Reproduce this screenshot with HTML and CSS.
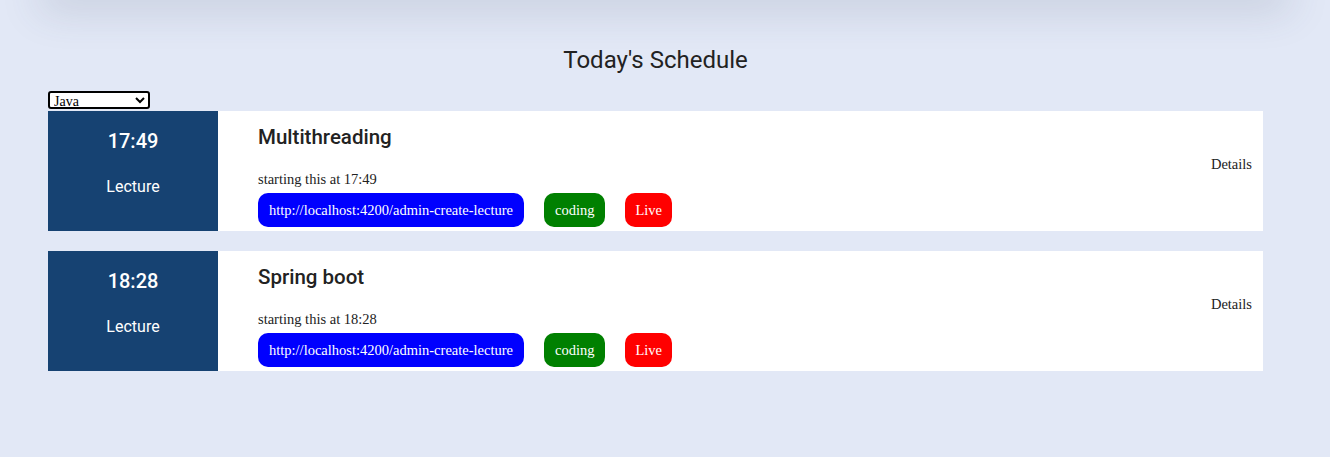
FILE: index.html
```html
<!DOCTYPE html>
<html>
<head>
<meta charset="utf-8">
<link rel="stylesheet" href="styles.css">
</head>
<body>
<div class="topbar"></div>
<main class="page">
  <h2 class="heading">Today's Schedule</h2>
  <select class="filter">
    <option>Java</option>
  </select>
  <div class="list">
    <div class="card">
      <div class="when">
        <div class="time">17:49</div>
        <div class="type">Lecture</div>
      </div>
      <div class="body">
        <div class="title">Multithreading</div>
        <div class="start">starting this at 17:49</div>
        <div class="tags">
          <span class="tag tag-link">http://localhost:4200/admin-create-lecture</span>
          <span class="tag tag-cat">coding</span>
          <span class="tag tag-live">Live</span>
        </div>
      </div>
      <div class="details">Details</div>
    </div>
    <div class="card">
      <div class="when">
        <div class="time">18:28</div>
        <div class="type">Lecture</div>
      </div>
      <div class="body">
        <div class="title">Spring boot</div>
        <div class="start">starting this at 18:28</div>
        <div class="tags">
          <span class="tag tag-link">http://localhost:4200/admin-create-lecture</span>
          <span class="tag tag-cat">coding</span>
          <span class="tag tag-live">Live</span>
        </div>
      </div>
      <div class="details">Details</div>
    </div>
  </div>
</main>
</body>
</html>
```
FILE: styles.css
```css
html, body {
  margin: 0;
  padding: 0;
}
body {
  background: #e2e8f6;
  font-family: "Liberation Serif", serif;
  font-size: 14.5px;
  color: #222;
  height: 457px;
  overflow: hidden;
}
.topbar {
  height: 10px;
  margin: -10px 50px 0;
  background: #e2e8f6;
  box-shadow: 0 0 40px 10px rgba(60, 70, 100, 0.18);
}
.page {
  padding: 0 67px 0 48px;
}
.heading {
  margin: 46px 0 0;
  text-align: center;
  font-family: Roboto, sans-serif;
  font-weight: 400;
  font-size: 24px;
  line-height: 28px;
  color: #222;
}
.filter {
  display: block;
  margin-top: 17px;
  width: 102px;
  height: 18px;
  font-family: "Liberation Serif", serif;
  font-size: 14px;
  border: 2px solid #000;
  border-radius: 3px;
  background: #fff;
  padding: 0;
}
.list {
  margin-top: 2px;
  display: flex;
  flex-direction: column;
  gap: 20px;
}
.card {
  display: flex;
  height: 120px;
  background: #fff;
}
.when {
  width: 170px;
  background: #164272;
  color: #fff;
  font-family: Roboto, sans-serif;
  display: flex;
  flex-direction: column;
  align-items: center;
  padding-top: 18px;
  box-sizing: border-box;
}
.time {
  font-size: 20px;
  font-weight: 500;
  line-height: 24px;
}
.type {
  margin-top: 24px;
  font-size: 16px;
  line-height: 20px;
}
.body {
  flex: 1;
  padding: 14px 0 0 40px;
}
.title {
  font-family: Roboto, sans-serif;
  font-weight: 500;
  font-size: 20.5px;
  line-height: 24px;
  color: #222;
}
.start {
  margin-top: 21px;
  line-height: 18px;
}
.tags {
  margin-top: 5px;
  display: flex;
  gap: 20px;
}
.tag {
  height: 34px;
  line-height: 34px;
  padding: 0 11px;
  border-radius: 10px;
  color: #fff;
}
.tag-link { background: #0000ff; }
.tag-cat { background: #008000; }
.tag-live { background: #ff0000; padding: 0 10px; }
.details {
  padding: 44px 11px 0 0;
  line-height: 18px;
}
```
